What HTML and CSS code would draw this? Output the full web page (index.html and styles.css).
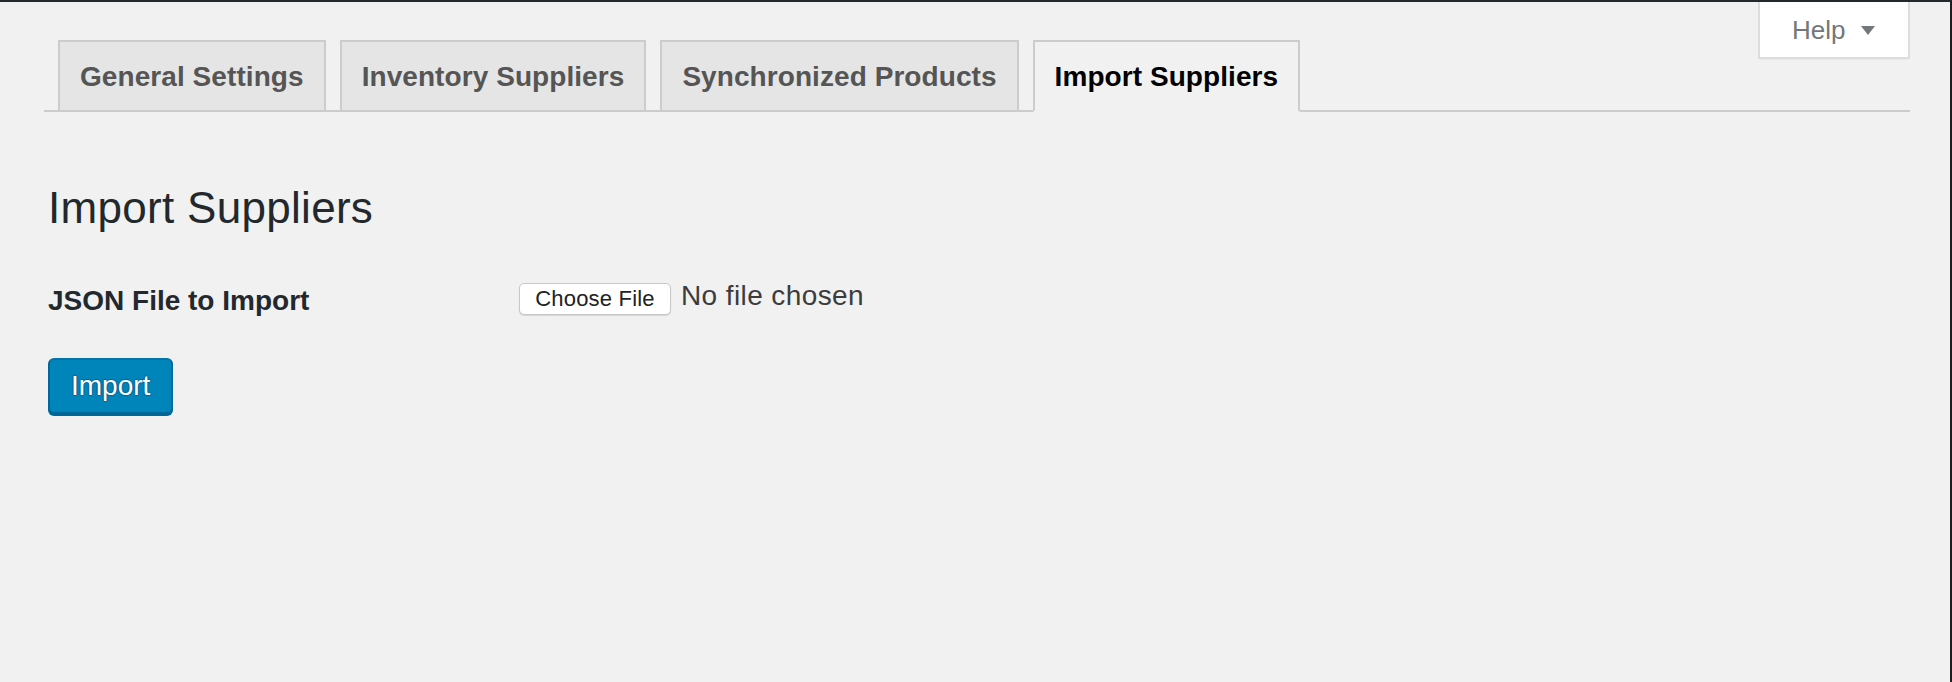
FILE: index.html
```html
<!DOCTYPE html>
<html lang="en">
<head>
<meta charset="utf-8">
<title>Import Suppliers</title>
<link rel="stylesheet" href="styles.css">
</head>
<body>
<div class="page">
  <div class="help">
    <button class="help-btn" type="button">Help<svg class="help-arrow" width="14" height="9" viewBox="0 0 14 9"><path d="M0 0H14L7 9Z" fill="#72777c"/></svg></button>
  </div>
  <nav class="tabs">
    <a class="tab">General Settings</a>
    <a class="tab">Inventory Suppliers</a>
    <a class="tab">Synchronized Products</a>
    <a class="tab tab-active">Import Suppliers</a>
  </nav>
  <h2 class="title">Import Suppliers</h2>
  <div class="form-row">
    <div class="form-label">JSON File to Import</div>
    <div class="file-field">
      <span class="file-btn">Choose File</span>
      <span class="file-name">No file chosen</span>
    </div>
  </div>
  <button class="primary" type="button">Import</button>
</div>
</body>
</html>
```

FILE: styles.css
```css
html, body {
  margin: 0;
  padding: 0;
}
body {
  background: #f1f1f1;
  border-top: 2px solid #23282d;
  border-right: 2px solid #1e1e1e;
  min-height: 100vh;
  box-sizing: border-box;
  font-family: "Liberation Sans", Arial, sans-serif;
  color: #23282d;
}
.page {
  position: relative;
  padding: 0 40px 0 44px;
}
.help {
  position: absolute;
  top: 0;
  right: 40px;
  background: #fff;
  border: 2px solid #ddd;
  border-top: none;
  box-shadow: 0 2px 2px -2px rgba(0,0,0,.1);
}
.help-btn {
  display: flex;
  align-items: center;
  width: 148px;
  box-sizing: border-box;
  border: none;
  background: transparent;
  padding: 6px 0 5px 32px;
  font-family: "Liberation Sans", Arial, sans-serif;
  font-size: 26px;
  line-height: 44px;
  color: #72777c;
}
.help-arrow {
  margin-left: 16px;
  margin-top: 1px;
}
.tabs {
  display: flex;
  align-items: flex-start;
  padding-top: 38px;
  border-bottom: 2px solid #ccc;
}
.tab {
  margin-left: 14px;
  padding: 11px 20px 9px;
  border: 2px solid #ccc;
  border-bottom: none;
  background: #e5e5e5;
  color: #555;
  font-size: 28px;
  font-weight: 700;
  line-height: 48px;
  letter-spacing: 0.07px;
  white-space: nowrap;
}
.tab-active {
  background: #f1f1f1;
  color: #000;
  border-bottom: 2px solid #f1f1f1;
  margin-bottom: -2px;
}
.title {
  margin: 67px 0 0 4px;
  font-size: 44px;
  font-weight: 400;
  line-height: 58px;
  letter-spacing: 0.3px;
  color: #23282d;
}
.form-row {
  display: grid;
  grid-template-columns: 471px 1fr;
  align-items: start;
  margin: 46px 0 0 4px;
}
.form-label {
  font-size: 28px;
  font-weight: 700;
  line-height: 36px;
  color: #23282d;
}
.file-field {
  display: flex;
  align-items: flex-start;
  gap: 10px;
}
.file-btn {
  display: block;
  width: 152px;
  height: 32px;
  box-sizing: border-box;
  text-align: center;
  background: #fff;
  border: 1px solid #c8c8c8;
  border-radius: 5px;
  box-shadow: 0 1px 1px rgba(0,0,0,.12);
  font-size: 22px;
  line-height: 30px;
  letter-spacing: 0.2px;
  color: #222;
}
.file-name {
  display: block;
  font-size: 28px;
  line-height: 25px;
  letter-spacing: 0.4px;
  color: #3c3c3c;
}
.primary {
  display: block;
  margin: 39px 0 0 4px;
  height: 56px;
  padding: 0 21px;
  background: #0085ba;
  border: 2px solid;
  border-color: #0073aa #006799 #006799;
  border-radius: 6px;
  box-shadow: 0 2px 0 #006799;
  color: #fff;
  font-family: "Liberation Sans", Arial, sans-serif;
  font-size: 28px;
  line-height: 52px;
  text-shadow: 0 -1px 1px #006799, 1px 0 1px #006799, 0 1px 1px #006799, -1px 0 1px #006799;
}
```
